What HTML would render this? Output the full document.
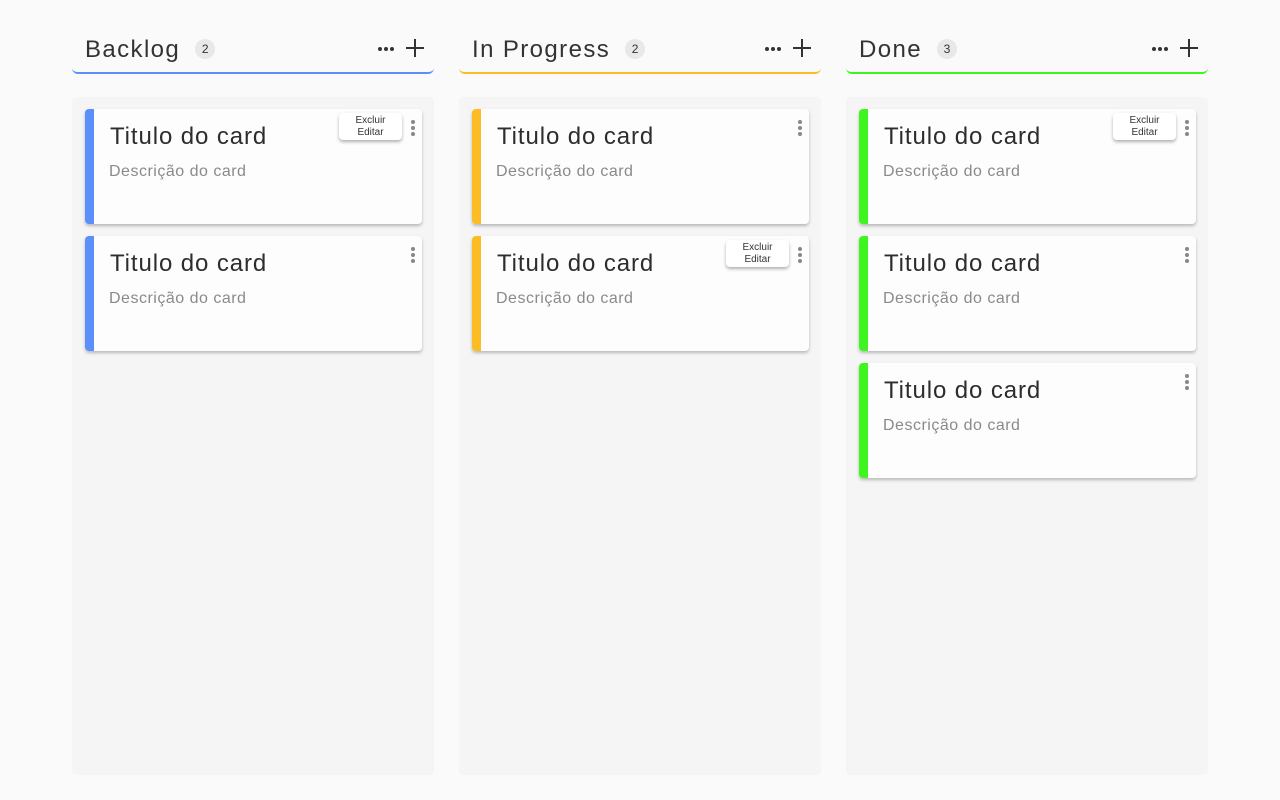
<!DOCTYPE html>
<html><head><meta charset="utf-8"><style>
*{box-sizing:border-box;margin:0;padding:0}
body{width:1280px;height:800px;background:#fafafa;font-family:"Liberation Sans",sans-serif;position:relative;overflow:hidden;color:#2d2d2d}
.col{position:absolute;top:0;width:362px}
.hdr{position:absolute;top:28px;left:0;width:362px;height:46px;border-bottom:2px solid;border-radius:0 0 6px 6px}
.hdr h2{position:absolute;left:13px;top:8px;font-size:24px;font-weight:normal;letter-spacing:1.4px;color:#333}
.badge{display:inline-block;width:20px;height:20px;border-radius:10px;background:#e8e8e8;font-size:12px;letter-spacing:0;text-align:center;line-height:20px;vertical-align:4px;margin-left:15px;color:#333}
.plus{position:absolute;right:9px;top:10px}
.dots3{position:absolute;right:38px;top:19px;width:18px;height:4px}
.dots3 i{position:absolute;top:0;width:4px;height:4px;border-radius:2px;background:#333}
.board{position:absolute;top:97px;left:0;width:362px;height:678px;background:#f5f5f5;border-radius:4px}
.card{position:absolute;left:13px;width:337px;height:115px;background:#fdfdfd;border-radius:4px;box-shadow:0 2px 3px rgba(0,0,0,.25);overflow:hidden}
.card .bar{position:absolute;left:0;top:0;bottom:0;width:9px}
.card h3{position:absolute;left:25px;top:14px;font-size:24px;font-weight:normal;letter-spacing:0.9px;color:#2d2d2d}
.card p{position:absolute;left:24px;top:54px;font-size:16px;letter-spacing:0.5px;color:#8a8a8a}
.vd{position:absolute;right:7px;top:11px;width:4px}
.vd i{display:block;width:4px;height:4px;border-radius:2px;background:#888;margin-bottom:2px}
.pop{position:absolute;right:20px;top:4px;width:63px;height:27px;background:#fff;border-radius:4px;box-shadow:0 2px 3px rgba(0,0,0,.3);font-size:10px;text-align:center;line-height:12px;padding-top:2px;color:#333}
</style></head><body>

<div class="col" style="left:72px">
<div class="hdr" style="border-color:#5b8ff9"><h2>Backlog<span class="badge">2</span></h2><div class="dots3"><i style="left:0"></i><i style="left:6px"></i><i style="left:12px"></i></div><svg class="plus" width="20" height="20"><path d="M10 1V19M1 10H19" stroke="#333" stroke-width="2"/></svg></div>
<div class="board">
<div class="card" style="top:12px"><div class="bar" style="background:#5b8ff9"></div><h3>Titulo do card</h3><p>Descrição do card</p><div class="pop">Excluir<br>Editar</div><div class="vd"><i></i><i></i><i></i></div></div>
<div class="card" style="top:139px"><div class="bar" style="background:#5b8ff9"></div><h3>Titulo do card</h3><p>Descrição do card</p><div class="vd"><i></i><i></i><i></i></div></div>
</div></div>

<div class="col" style="left:459px">
<div class="hdr" style="border-color:#fbbd23"><h2>In Progress<span class="badge">2</span></h2><div class="dots3"><i style="left:0"></i><i style="left:6px"></i><i style="left:12px"></i></div><svg class="plus" width="20" height="20"><path d="M10 1V19M1 10H19" stroke="#333" stroke-width="2"/></svg></div>
<div class="board">
<div class="card" style="top:12px"><div class="bar" style="background:#fbbd23"></div><h3>Titulo do card</h3><p>Descrição do card</p><div class="vd"><i></i><i></i><i></i></div></div>
<div class="card" style="top:139px"><div class="bar" style="background:#fbbd23"></div><h3>Titulo do card</h3><p>Descrição do card</p><div class="pop">Excluir<br>Editar</div><div class="vd"><i></i><i></i><i></i></div></div>
</div></div>

<div class="col" style="left:846px">
<div class="hdr" style="border-color:#3ef51f"><h2>Done<span class="badge">3</span></h2><div class="dots3"><i style="left:0"></i><i style="left:6px"></i><i style="left:12px"></i></div><svg class="plus" width="20" height="20"><path d="M10 1V19M1 10H19" stroke="#333" stroke-width="2"/></svg></div>
<div class="board">
<div class="card" style="top:12px"><div class="bar" style="background:#3ef51f"></div><h3>Titulo do card</h3><p>Descrição do card</p><div class="pop">Excluir<br>Editar</div><div class="vd"><i></i><i></i><i></i></div></div>
<div class="card" style="top:139px"><div class="bar" style="background:#3ef51f"></div><h3>Titulo do card</h3><p>Descrição do card</p><div class="vd"><i></i><i></i><i></i></div></div>
<div class="card" style="top:266px"><div class="bar" style="background:#3ef51f"></div><h3>Titulo do card</h3><p>Descrição do card</p><div class="vd"><i></i><i></i><i></i></div></div>
</div></div>

</body></html>
